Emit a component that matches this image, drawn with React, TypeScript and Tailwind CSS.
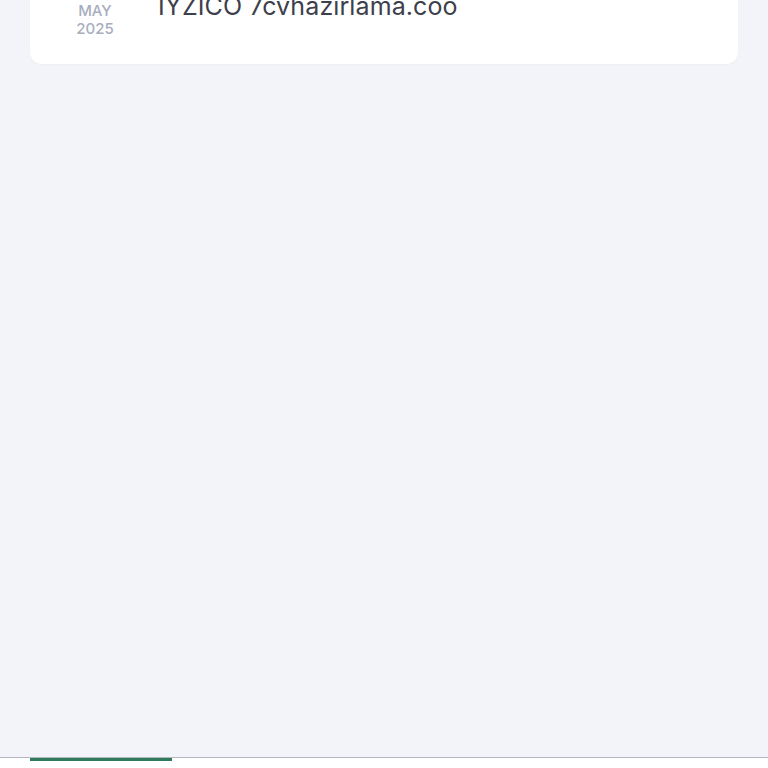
import React from "react";

export default function App() {
  return (
    <div
      className="w-[768px] h-[768px] overflow-hidden bg-[#f3f4f9] flex flex-col"
      style={{ fontFamily: "Inter, 'Noto Sans', sans-serif" }}
    >
      <div className="flex-1 px-[30px]">
        <div className="mt-[-30px] h-[94px] bg-white rounded-b-[12px] shadow-[0_1px_2px_rgba(0,0,0,0.03)] flex items-start">
          <div className="w-[130px] pt-[32px] flex flex-col items-center">
            <div className="w-[70px] flex flex-col items-center text-[15px] leading-[18px] font-medium text-[#a9adc0]">
              <span>MAY</span>
              <span>2025</span>
            </div>
          </div>
          <div className="pt-[21px] ml-[-2px] text-[25px] leading-[30px] tracking-[0.1px] text-[#3d404b]">
            IYZICO 7cvhazirlama.coo
          </div>
        </div>
      </div>
      <div className="h-[11px] border-t border-[#b3b7c0] bg-white px-[30px]">
        <div className="w-[142px] h-[3px] bg-[#2e7a5a]" />
      </div>
    </div>
  );
}
